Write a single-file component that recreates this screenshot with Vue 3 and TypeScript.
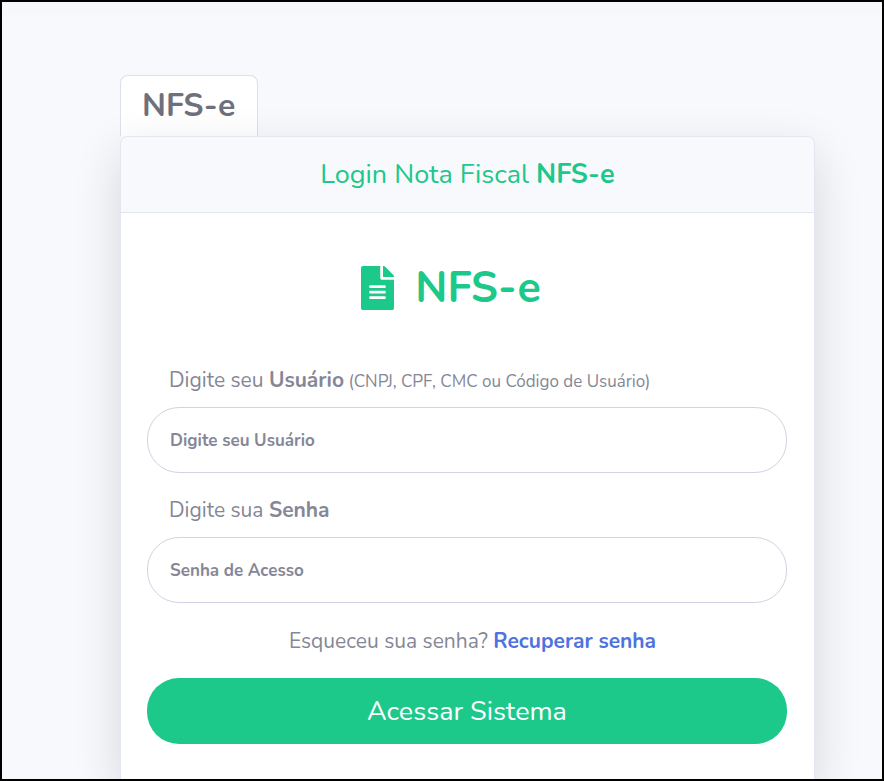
<script setup lang="ts">
import { ref } from 'vue'

const usuario = ref('')
const senha = ref('')
</script>

<template>
  <div class="page">
    <main class="login">
      <h1 class="tab">NFS-e</h1>
      <section class="card">
        <h2 class="card-header">Login Nota Fiscal <b>NFS-e</b></h2>
        <div class="card-body">
          <div class="brand">
            <svg class="brand-icon" viewBox="0 0 384 512" aria-hidden="true">
              <path
                fill="currentColor"
                d="M224 136V0H24C10.700 0 0 10.700 0 24v464c0 13.300 10.700 24 24 24h336c13.300 0 24-10.700 24-24V160H248c-13.200 0-24-10.800-24-24zm64 236c0 6.600-5.400 12-12 12H108c-6.600 0-12-5.400-12-12v-8c0-6.600 5.400-12 12-12h168c6.600 0 12 5.400 12 12v8zm0-64c0 6.600-5.400 12-12 12H108c-6.600 0-12-5.400-12-12v-8c0-6.600 5.400-12 12-12h168c6.600 0 12 5.400 12 12v8zm0-72v8c0 6.600-5.400 12-12 12H108c-6.600 0-12-5.400-12-12v-8c0-6.600 5.400-12 12-12h168c6.600 0 12 5.400 12 12zm96-114.100v6.100H256V0h6.100c6.400 0 12.500 2.500 17 7l97.900 98c4.500 4.500 7 10.600 7 16.900z"
              />
            </svg>
            <span>NFS-e</span>
          </div>
          <form @submit.prevent>
            <div class="field">
              <label for="usuario">
                Digite seu <b>Usuário</b>
                <small> (CNPJ, CPF, CMC ou Código de Usuário)</small>
              </label>
              <input id="usuario" v-model="usuario" type="text" placeholder="Digite seu Usuário" />
            </div>
            <div class="field">
              <label for="senha">Digite sua <b>Senha</b></label>
              <input id="senha" v-model="senha" type="password" placeholder="Senha de Acesso" />
            </div>
            <p class="recover">Esqueceu sua senha? <a href="#recuperar">Recuperar senha</a></p>
            <button type="submit">Acessar Sistema</button>
          </form>
        </div>
      </section>
    </main>
  </div>
</template>

<style>
body {
  margin: 0;
}
</style>

<style scoped>
.page {
  box-sizing: border-box;
  display: flex;
  min-height: 100vh;
  padding: 73px 67px 0 118px;
  overflow: hidden;
  border: 2px solid #000;
  background: linear-gradient(#f5f6f9, #f8f9fc 22px);
  color: #858796;
  font-family: Nunito, Lato, sans-serif;
  font-size: 21px;
  line-height: 32px;
}

.login {
  display: flex;
  flex: 1;
  flex-direction: column;
  align-items: flex-start;
}

.tab {
  margin: 0;
  padding: 10px 22px 10px 21px;
  border: 1px solid #dddfeb;
  border-bottom: 0;
  border-radius: 8px 8px 0 0;
  background: #fff;
  color: #6e707e;
  font-size: 32px;
  font-weight: 700;
  line-height: 40px;
}

.card {
  position: relative;
  box-sizing: border-box;
  flex: 1;
  width: 100%;
  border: 1px solid #e3e6f0;
  border-bottom: 0;
  border-radius: 8px 8px 0 0;
  background: #fff;
  box-shadow: 0 16px 48px rgba(0, 0, 0, 0.14);
}

.card-header {
  margin: 0;
  padding: 22px 26px 21px;
  border-bottom: 1px solid #e3e6f0;
  border-radius: 7px 7px 0 0;
  background: #f8f9fc;
  color: #1cc88a;
  font-size: 27px;
  font-weight: 400;
  line-height: 32px;
  text-align: center;
}

.card-body {
  padding: 48px 27px 35px 26px;
}

.brand {
  display: flex;
  align-items: center;
  justify-content: center;
  gap: 21px;
  padding-right: 32px;
  color: #1cc88a;
  font-size: 43px;
  font-weight: 700;
  line-height: 54px;
}

.brand-icon {
  width: 33px;
  height: 44px;
}

form {
  display: flex;
  flex-direction: column;
  margin-top: 49px;
}

.field {
  display: flex;
  flex-direction: column;
  gap: 11px;
  margin-bottom: 21px;
}

label {
  padding-left: 22px;
}

small {
  font-size: 17px;
  line-height: 1;
}

input {
  box-sizing: border-box;
  width: 100%;
  height: 66px;
  padding: 0 22px;
  border: 1px solid #d1d3e2;
  border-radius: 32px;
  outline: 0;
  background: #fff;
  color: #6e707e;
  font: 700 17px Nunito, Lato, sans-serif;
}

input::placeholder {
  color: #858796;
  opacity: 1;
}

input:focus {
  border-color: #1cc88a;
}

.recover {
  margin: 0 0 20px;
  padding-left: 11px;
  line-height: 34px;
  text-align: center;
}

a {
  color: #4e73df;
  font-weight: 700;
  text-decoration: none;
}

button {
  height: 66px;
  border: 0;
  border-radius: 32px;
  background: #1cc88a;
  color: #fff;
  cursor: pointer;
  font: 400 27px Nunito, Lato, sans-serif;
}
</style>
